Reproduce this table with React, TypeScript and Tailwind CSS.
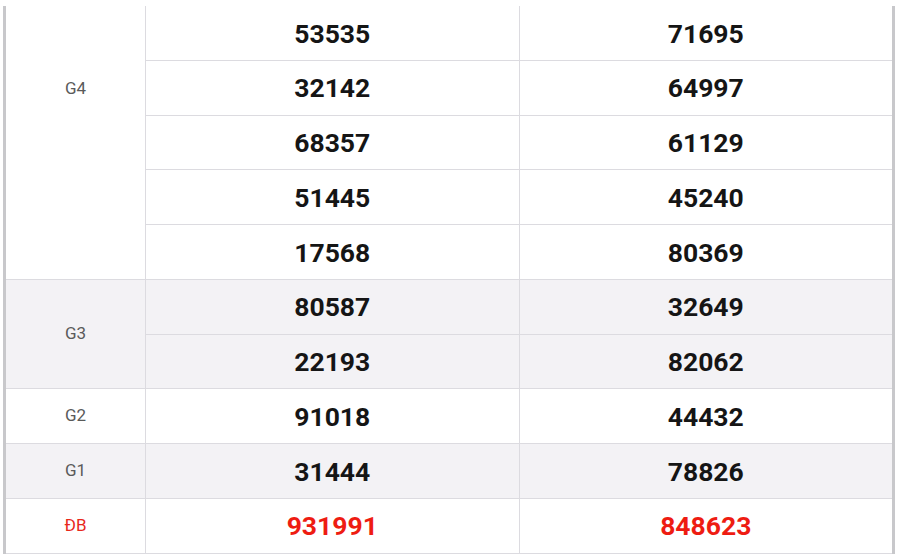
import React from 'react';

type Group = { label: string; rows: [string, string][]; shaded?: boolean; special?: boolean; labelTop?: boolean };

const groups: Group[] = [
    { label: 'G4', labelTop: true, rows: [['53535', '71695'], ['32142', '64997'], ['68357', '61129'], ['51445', '45240'], ['17568', '80369']] },
    { label: 'G3', shaded: true, rows: [['80587', '32649'], ['22193', '82062']] },
    { label: 'G2', rows: [['91018', '44432']] },
    { label: 'G1', shaded: true, rows: [['31444', '78826']] },
    { label: 'ĐB', special: true, rows: [['931991', '848623']] },
];

const PrizeGroup = ({ group }: { group: Group }) => {
    const bg = group.shaded ? 'bg-[#f3f2f5]' : 'bg-white';
    const numColor = group.special ? 'text-[#ee1c12]' : 'text-[#151515]';
    const labelPos = group.labelTop ? 'items-start pt-[70px]' : 'items-center';
    return (
        <div className={`flex ${bg}`}>
            <div className={`w-[140px] shrink-0 flex justify-center ${labelPos} border-r border-b border-[#dcdbe0] text-[17px] ${group.special ? 'text-[#e8281c]' : 'text-[#5a5a5a]'}`}>
                {group.label}
            </div>
            <div className="flex-1 flex flex-col">
                {group.rows.map((r, i) => (
                    <div key={i} className="flex h-[54.75px] border-b border-[#dcdbe0]">
                        <div className={`flex-1 flex items-center justify-center pt-[1px] border-r border-[#dcdbe0] text-[26.5px] font-bold ${numColor}`}>{r[0]}</div>
                        <div className={`flex-1 flex items-center justify-center pt-[1px] text-[26.5px] font-bold ${numColor}`}>{r[1]}</div>
                    </div>
                ))}
            </div>
        </div>
    );
};

export default function App() {
    return (
        <div className="w-[900px] h-[554px] overflow-hidden bg-white" style={{ fontFamily: 'Roboto, "Liberation Sans", sans-serif' }}>
            <div className="ml-[3px] mt-[8px] w-[892px] h-[600px] border-x-[3px] border-[#c8c8cb]">
                <div className="-mt-[2px]">
                    {groups.map((g) => <PrizeGroup key={g.label} group={g} />)}
                </div>
            </div>
        </div>
    );
}
